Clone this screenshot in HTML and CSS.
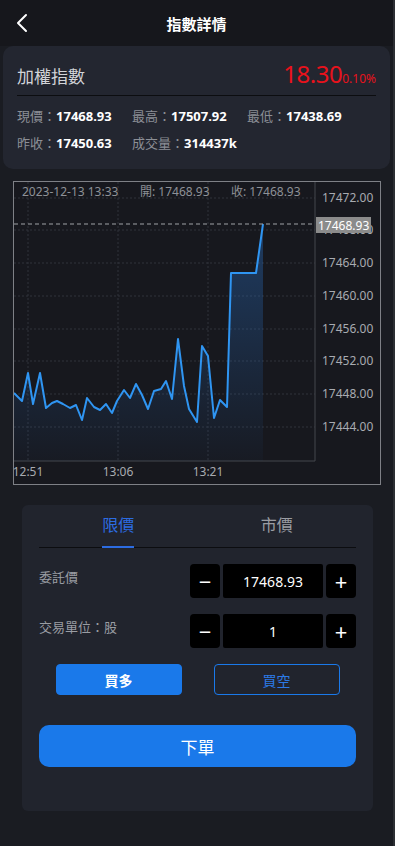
FILE: index.html
```html
<!DOCTYPE html>
<html lang="zh-Hant">
<head>
    <meta charset="UTF-8">
    <meta name="viewport" content="width=device-width, initial-scale=1.0">
    <title>指數詳情</title>
    <link rel="stylesheet" href="styles.css">
</head>
<body>
    <header class="topbar">
        <svg class="back" width="14" height="20" viewBox="0 0 14 20"><path d="M11 2 L3 10 L11 18" fill="none" stroke="#fff" stroke-width="2" stroke-linecap="round" stroke-linejoin="round"/></svg>
        <h1>指數詳情</h1>
    </header>

    <section class="summary">
        <div class="summary-head">
            <span class="name">加權指數</span>
            <span class="change"><b>18.30</b><small>0.10%</small></span>
        </div>
        <div class="stats">
            <p><span>現價：</span>17468.93</p>
            <p><span>最高：</span>17507.92</p>
            <p><span>最低：</span>17438.69</p>
            <p><span>昨收：</span>17450.63</p>
            <p><span>成交量：</span>314437k</p>
        </div>
    </section>

    <div class="chart">
        <svg width="366" height="302" viewBox="0 0 366 302">
            <defs>
                <linearGradient id="fill" x1="0" y1="0" x2="0" y2="1">
                    <stop offset="0" stop-color="#2a72c8" stop-opacity="0.4"/>
                    <stop offset="1" stop-color="#2a72c8" stop-opacity="0.03"/>
                </linearGradient>
            </defs>
            <g class="grid">
                <line x1="14" y1="0" x2="14" y2="279"/>
                <line x1="104" y1="0" x2="104" y2="279"/>
                <line x1="194" y1="0" x2="194" y2="279"/>
                <line x1="0" y1="16" x2="301" y2="16"/>
                <line x1="0" y1="48" x2="301" y2="48"/>
                <line x1="0" y1="81" x2="301" y2="81"/>
                <line x1="0" y1="114" x2="301" y2="114"/>
                <line x1="0" y1="147" x2="301" y2="147"/>
                <line x1="0" y1="179" x2="301" y2="179"/>
                <line x1="0" y1="212" x2="301" y2="212"/>
                <line x1="0" y1="245" x2="301" y2="245"/>
            </g>
            <path class="frame" d="M301 0 V279 H0"/>
            <polygon fill="url(#fill)" points="0,211 8,219 14,191 19,222 26,191 32,226 38,221 43,219 49,222 56,226 62,223 68,238 73,216 80,225 86,228 92,222 98,231 103,219 110,208 116,216 122,202 128,213 134,227 140,209 147,207 152,199 158,217 164,157 170,204 175,227 183,240 188,164 194,174 200,236 206,218 213,225 217,91 242,91 249,42 249,279 0,279"/>
            <polyline class="line" points="0,211 8,219 14,191 19,222 26,191 32,226 38,221 43,219 49,222 56,226 62,223 68,238 73,216 80,225 86,228 92,222 98,231 103,219 110,208 116,216 122,202 128,213 134,227 140,209 147,207 152,199 158,217 164,157 170,204 175,227 183,240 188,164 194,174 200,236 206,218 213,225 217,91 242,91 249,42"/>
            <line class="dash" x1="0" y1="42" x2="301" y2="42"/>

            <g class="info">
                <text x="8" y="14">2023-12-13 13:33</text>
                <text x="126" y="14">開: 17468.93</text>
                <text x="217" y="14">收: 17468.93</text>
            </g>
            <g class="ylabels">
                <text x="308" y="20">17472.00</text>
                <text x="308" y="52">17468.00</text>
                <text x="308" y="85">17464.00</text>
                <text x="308" y="118">17460.00</text>
                <text x="308" y="151">17456.00</text>
                <text x="308" y="183">17452.00</text>
                <text x="308" y="216">17448.00</text>
                <text x="308" y="249">17444.00</text>
            </g>
            <rect x="302" y="35" width="55" height="16" fill="#8b8b8b"/>
            <text class="tag" x="304" y="48">17468.93</text>
            <g class="xlabels">
                <text x="14" y="294">12:51</text>
                <text x="104" y="294">13:06</text>
                <text x="194" y="294">13:21</text>
            </g>
        </svg>
    </div>

    <section class="order">
        <div class="tabs">
            <div class="tab active">限價</div>
            <div class="tab">市價</div>
        </div>
        <div class="field">
            <label>委託價</label>
            <div class="stepper">
                <button class="step">&minus;</button>
                <div class="value">17468.93</div>
                <button class="step">+</button>
            </div>
        </div>
        <div class="field">
            <label>交易單位：股</label>
            <div class="stepper">
                <button class="step">&minus;</button>
                <div class="value">1</div>
                <button class="step">+</button>
            </div>
        </div>
        <div class="sides">
            <button class="side buy">買多</button>
            <button class="side sell">買空</button>
        </div>
        <button class="submit">下單</button>
    </section>
</body>
</html>
```

FILE: styles.css
```css
* { box-sizing: border-box; }
body { margin: 0; width: 395px; min-height: 846px; background: #1a1c22; color: #fff; font-family: "Noto Sans", "Noto Sans CJK TC", sans-serif; border-right: 2px solid #2c2e33; }
button { font-family: inherit; cursor: pointer; }

.topbar { height: 46px; background: #16171c; display: flex; align-items: center; justify-content: center; position: relative; }
.topbar h1 { margin: 0; font-size: 15px; font-weight: bold; }
.back { position: absolute; left: 15px; top: 13px; }

.summary { margin: 0 3px; background: #232630; border-radius: 10px; padding: 11px 14px 16px; }
.summary-head { display: flex; justify-content: space-between; align-items: baseline; padding-bottom: 5px; border-bottom: 1px solid #0c0d10; }
.name { font-size: 17px; color: #d2d4d8; }
.change { color: #e8121c; }
.change b { font-size: 24px; font-weight: normal; letter-spacing: -0.5px; }
.change small { font-size: 12px; }
.stats { display: grid; grid-template-columns: 115px 115px 115px; row-gap: 7px; padding-top: 10px; }
.stats p { margin: 0; font-size: 13px; font-weight: bold; line-height: 20px; }
.stats span { color: #8c8f96; font-weight: normal; }

.chart { margin: 12px 0 0 13px; width: 368px; height: 304px; border: 1px solid #7e8086; background: #17181e; }
.chart svg { display: block; }
.grid line { stroke: #30333a; stroke-width: 1; stroke-dasharray: 2 2; }
.frame { fill: none; stroke: #44464c; stroke-width: 1; }
.line { fill: none; stroke: #2f95f2; stroke-width: 2; stroke-linejoin: round; }
.dash { stroke: #a0a2a6; stroke-width: 1; stroke-dasharray: 4 3; }
.chart text { font-family: "Noto Sans", "Noto Sans CJK TC", sans-serif; font-size: 12px; }
.info text { fill: #8e9197; }
.ylabels text { fill: #a8abb1; }
.xlabels text { fill: #a8abb1; text-anchor: middle; }
.tag { fill: #fff; }

.order { margin: 20px 22px 0; width: 351px; background: #21242d; border-radius: 6px; padding: 6px 17px 44px; }
.tabs { display: flex; border-bottom: 1px solid #0c0d10; }
.tab { flex: 1; text-align: center; font-size: 16px; color: #9a9da3; height: 36px; line-height: 28px; }
.tab.active { color: #2c6ce2; position: relative; }
.tab.active::after { content: ""; position: absolute; left: 63px; bottom: -1px; width: 32px; height: 2px; background: #2c6ce2; }

.field { display: flex; justify-content: space-between; margin-top: 16px; }
.field label { font-size: 13px; color: #9a9da3; padding-top: 3px; }
.stepper { display: flex; gap: 3px; height: 34px; }
.step { width: 30px; border: 0; border-radius: 4px; background: #000; color: #fff; font-size: 22px; line-height: 1; padding: 0; }
.value { width: 100px; background: #000; border-radius: 2px; display: flex; align-items: center; justify-content: center; font-size: 14px; }

.sides { display: flex; justify-content: center; gap: 32px; margin-top: 16px; }
.side { width: 126px; height: 31px; border-radius: 4px; font-size: 14px; }
.buy { background: #1a79ea; border: 1px solid #1a79ea; color: #fff; font-weight: bold; }
.sell { background: transparent; border: 1px solid #1a79ea; color: #2c7ae6; }

.submit { display: block; width: 100%; height: 42px; margin-top: 30px; border: 0; border-radius: 10px; background: #1a79ea; color: #fff; font-size: 17px; }
```
